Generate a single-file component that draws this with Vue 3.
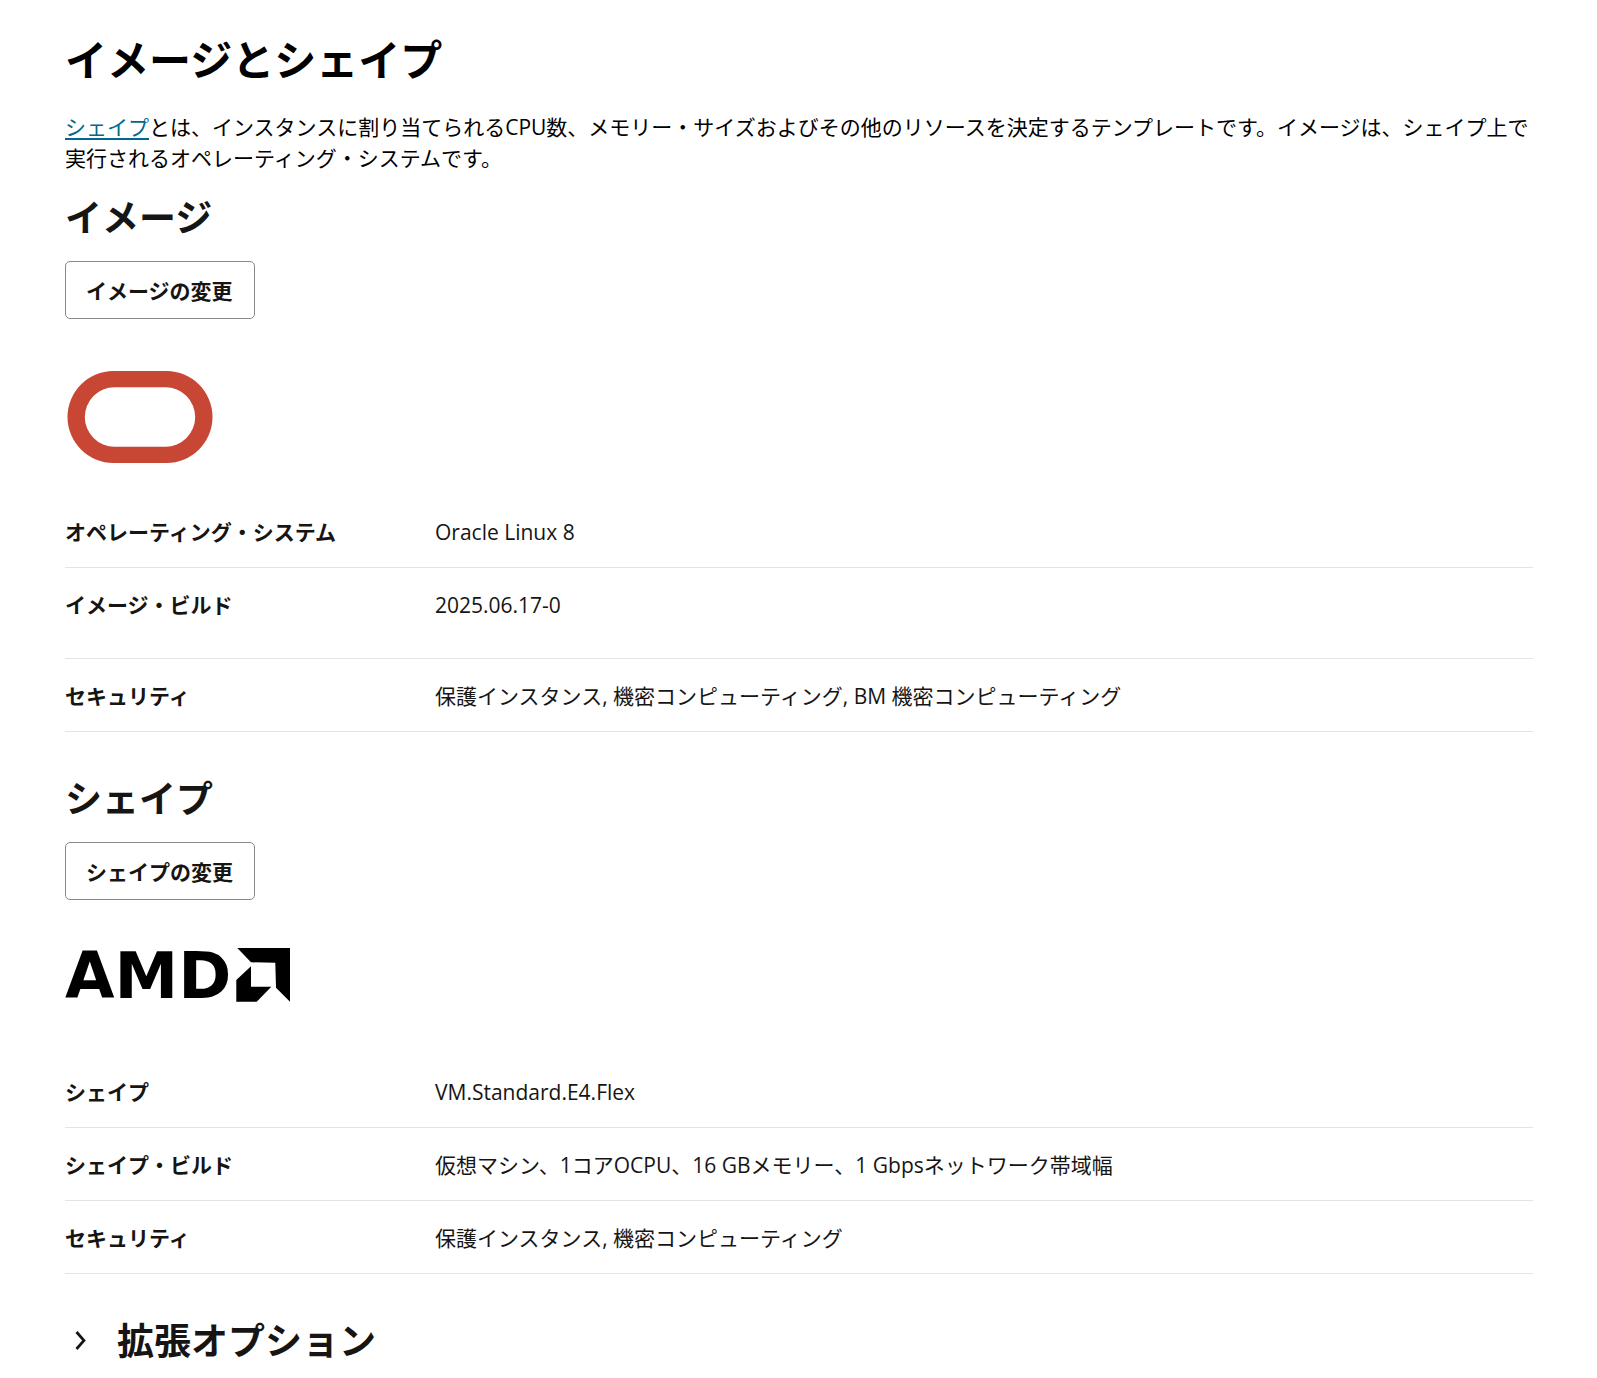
<script setup>
const image = [
  { label: 'オペレーティング・システム', value: 'Oracle Linux 8' },
  { label: 'イメージ・ビルド', value: '2025.06.17-0', roomy: true },
  { label: 'セキュリティ', value: '保護インスタンス, 機密コンピューティング, BM 機密コンピューティング' },
]
const shape = [
  { label: 'シェイプ', value: 'VM.Standard.E4.Flex' },
  { label: 'シェイプ・ビルド', value: '仮想マシン、1コアOCPU、16 GBメモリー、1 Gbpsネットワーク帯域幅' },
  { label: 'セキュリティ', value: '保護インスタンス, 機密コンピューティング' },
]
</script>

<template>
  <main class="page">
    <h1>イメージとシェイプ</h1>
    <p class="intro"><a href="#shape">シェイプ</a>とは、インスタンスに割り当てられるCPU数、メモリー・サイズおよびその他のリソースを決定するテンプレートです。イメージは、シェイプ上で実行されるオペレーティング・システムです。</p>

    <section>
      <h2>イメージ</h2>
      <button type="button" class="btn">イメージの変更</button>
      <div class="logo">
        <svg width="150" height="150" viewBox="0 0 150 150" role="img" aria-label="Oracle">
          <path fill="#c74634" fill-rule="evenodd" d="M48.500 28h53a46 46 0 0 1 0 92h-53a46 46 0 0 1 0-92zM49.500 44.300a29.700 29.700 0 0 0 0 59.400h51a29.700 29.700 0 0 0 0-59.400z" />
        </svg>
      </div>
      <table>
        <tbody>
          <tr v-for="row in image" :key="row.label" :class="{ roomy: row.roomy }">
            <th scope="row">{{ row.label }}</th>
            <td>{{ row.value }}</td>
          </tr>
        </tbody>
      </table>
    </section>

    <section id="shape" class="shape">
      <h2>シェイプ</h2>
      <button type="button" class="btn">シェイプの変更</button>
      <div class="logo">
        <svg width="226" height="129" viewBox="0 0 226 129" role="img" aria-label="AMD">
          <text class="amd" x="0" y="74">AMD</text>
          <path d="M172.300 24H225v53.700l-14-14-.700-25-24.300-.400zM186 42.300v20.400h20.300l-14.600 15h-20.400V56z" />
        </svg>
      </div>
      <table>
        <tbody>
          <tr v-for="row in shape" :key="row.label">
            <th scope="row">{{ row.label }}</th>
            <td>{{ row.value }}</td>
          </tr>
        </tbody>
      </table>
    </section>

    <h2 class="more">
      <button type="button" aria-expanded="false">
        <svg width="30" height="30" viewBox="0 0 30 30" aria-hidden="true">
          <path d="M11.500 6l7.500 8.500-7.500 8.500" fill="none" stroke="currentColor" stroke-width="2.700" />
        </svg>
        拡張オプション
      </button>
    </h2>
  </main>
</template>

<style>
body {
  background: #fff;
}
</style>

<style scoped>
.page {
  padding: 32px 64px 16px 65px;
  color: #161513;
  font-family: "Open Sans", "Noto Sans CJK JP", sans-serif;
  font-size: 21px;
  line-height: 31px;
}
h1, h2, p { margin: 0; }
h1 { font-size: 42px; line-height: 56px; color: #000; }
h2 { font-size: 37px; line-height: 48px; }
.intro { margin: 24px 0 20px; color: #000; }
a {
  color: #00688c;
  text-decoration-thickness: 2px;
  text-underline-offset: 3px;
  text-decoration-skip-ink: none;
}
.btn {
  display: block;
  height: 58px;
  margin-top: 19px;
  padding: 2px 21px 0 20px;
  border: 1px solid #8b8986;
  border-radius: 5px;
  background: #fff;
  color: inherit;
  font: inherit;
  font-weight: 700;
}
.logo { margin: 24px 0 2px; }
.logo svg { display: block; }
.amd {
  font-family: "DejaVu Sans", sans-serif;
  font-size: 64px;
  font-weight: 700;
  fill: #000;
}
table { width: 100%; border-spacing: 0; table-layout: fixed; }
th, td {
  padding: 22px 0 19px;
  border-bottom: 1px solid #e4e4e4;
  text-align: left;
  vertical-align: top;
}
th { width: 370px; }
.roomy th, .roomy td { padding-bottom: 37px; }
.shape { margin-top: 43px; }
.more { margin-top: 43px; }
.more button {
  display: flex;
  align-items: center;
  gap: 22px;
  padding: 0;
  border: 0;
  background: none;
  color: inherit;
  font: inherit;
}
</style>
